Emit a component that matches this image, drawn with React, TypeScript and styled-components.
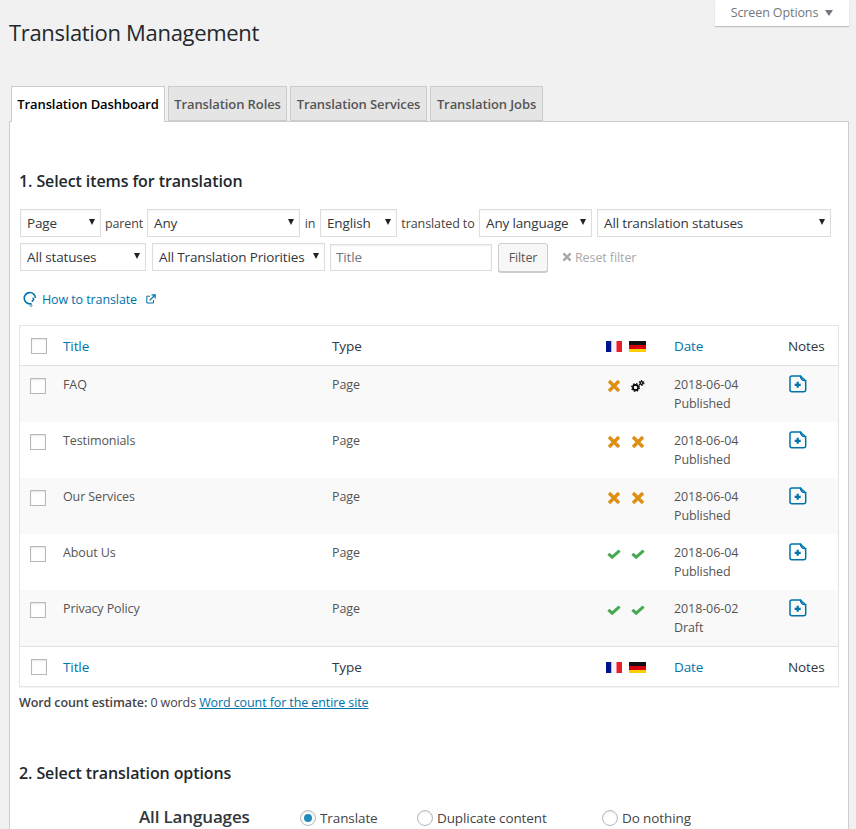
import styled, { createGlobalStyle } from "styled-components";

const FONT = `"Open Sans", "Noto Sans", "Liberation Sans", sans-serif`;

const rows = [
  { title: "FAQ", date: "2018-06-04", status: "Published", fr: "no", de: "busy" },
  { title: "Testimonials", date: "2018-06-04", status: "Published", fr: "no", de: "no" },
  { title: "Our Services", date: "2018-06-04", status: "Published", fr: "no", de: "no" },
  { title: "About Us", date: "2018-06-04", status: "Published", fr: "yes", de: "yes" },
  { title: "Privacy Policy", date: "2018-06-02", status: "Draft", fr: "yes", de: "yes" },
];

const Global = createGlobalStyle`
  html, body {
    margin: 0;
    height: 829px;
    overflow: hidden;
    background: #f1f1f1;
    font-family: ${FONT};
    font-size: 12.5px;
    letter-spacing: -0.1px;
    color: #444;
  }
`;

const Page = styled.div`
  width: 856px;
  height: 829px;
  overflow: hidden;
  position: relative;
`;

const ScreenOptions = styled.div`
  position: absolute;
  top: 0;
  right: 7px;
  width: 134px;
  height: 26px;
  box-sizing: border-box;
  background: #fff;
  box-shadow: 0 1px 1px rgba(0, 0, 0, 0.2);
  color: #72777c;
  display: flex;
  align-items: center;
  justify-content: center;
  gap: 7px;
  padding-bottom: 1px;
`;

const DownArrow = styled.span`
  width: 0;
  height: 0;
  border-left: 4.5px solid transparent;
  border-right: 4.5px solid transparent;
  border-top: 6px solid #72777c;
`;

const Heading = styled.h1`
  margin: 0;
  padding: 17px 0 0 9px;
  height: 68px;
  box-sizing: border-box;
  font-size: 22px;
  line-height: 30px;
  font-weight: 400;
  letter-spacing: -0.32px;
  color: #23282d;
`;

const Tabs = styled.div`
  display: flex;
  gap: 3px;
  padding-left: 11px;
  margin-top: 18px;
  height: 35px;
  position: relative;
  z-index: 1;
`;

const Tab = styled.div<{ $active?: boolean; $w: number }>`
  width: ${(p) => p.$w}px;
  box-sizing: border-box;
  height: ${(p) => (p.$active ? 36 : 35)}px;
  border: 1px solid #ccc;
  border-bottom: ${(p) => (p.$active ? "none" : "1px solid #ccc")};
  background: ${(p) => (p.$active ? "#fff" : "#e5e5e5")};
  color: ${(p) => (p.$active ? "#000" : "#555")};
  font-size: 13px;
  font-weight: 600;
  letter-spacing: -0.1px;
  text-align: center;
  line-height: 34px;
  white-space: nowrap;
`;

const Panel = styled.div`
  margin: 0 7px 0 9px;
  box-sizing: border-box;
  height: 720px;
  background: #fff;
  border: 1px solid #ccc;
  padding: 46px 9px 0 9px;
`;

const SectionTitle = styled.h2`
  margin: 0;
  font-size: 16px;
  line-height: 26px;
  font-weight: 600;
  letter-spacing: -0.1px;
  color: #23282d;
`;

const FilterRow = styled.div<{ $top: number }>`
  display: flex;
  align-items: center;
  height: 28px;
  margin-top: ${(p) => p.$top}px;
  margin-left: 1px;
`;

const SelectWrap = styled.div<{ $w: number; $gap?: number }>`
  position: relative;
  width: ${(p) => p.$w}px;
  margin-left: ${(p) => p.$gap ?? 0}px;
  height: 28px;
  flex: none;

  &::after {
    content: "";
    position: absolute;
    right: 6px;
    top: 10px;
    border-left: 3.5px solid transparent;
    border-right: 3.5px solid transparent;
    border-top: 6px solid #222;
    pointer-events: none;
  }
`;

const Select = styled.select`
  appearance: none;
  width: 100%;
  height: 28px;
  box-sizing: border-box;
  border: 1px solid #ddd;
  border-radius: 0;
  background: #fff;
  padding: 0 0 0 6px;
  font-family: inherit;
  font-size: 13.5px;
  letter-spacing: -0.15px;
  color: #32373c;
  box-shadow: inset 0 1px 2px rgba(0, 0, 0, 0.04);
`;

const FilterLabel = styled.span<{ $w: number }>`
  width: ${(p) => p.$w}px;
  text-align: center;
  flex: none;
  color: #444;
`;

const TitleInput = styled.input`
  width: 162px;
  height: 27px;
  margin-left: 5px;
  box-sizing: border-box;
  border: 1px solid #ddd;
  padding: 0 5px;
  font-family: inherit;
  font-size: 13.5px;
  letter-spacing: -0.15px;
  box-shadow: inset 0 1px 2px rgba(0, 0, 0, 0.07);
  &::placeholder {
    color: #72777c;
  }
`;

const FilterButton = styled.button`
  width: 50px;
  height: 29px;
  margin-left: 6px;
  box-sizing: border-box;
  border: 1px solid #ccc;
  border-radius: 3px;
  background: #f7f7f7;
  box-shadow: 0 1px 0 #ccc;
  color: #555;
  font: inherit;
  letter-spacing: inherit;
  padding: 0;
`;

const ResetFilter = styled.span`
  display: flex;
  align-items: center;
  gap: 3px;
  margin-left: 14px;
  color: #a9a9a9;
`;

const HowTo = styled.div`
  display: flex;
  align-items: center;
  height: 20px;
  margin: 18px 0 0 3px;
  color: #0073aa;
`;

const HowToText = styled.span`
  margin: 0 9px 0 4px;
`;

const ListTable = styled.table`
  width: 820px;
  margin-top: 16px;
  table-layout: fixed;
  border-collapse: separate;
  border-spacing: 0;
  border: 1px solid #e5e5e5;
  box-shadow: 0 1px 1px rgba(0, 0, 0, 0.04);
`;

const HeadCell = styled.th<{ $w?: number; $link?: boolean; $foot?: boolean }>`
  ${(p) => (p.$w ? `width: ${p.$w}px;` : "")}
  height: 40px;
  padding: 1px 0 0;
  box-sizing: border-box;
  text-align: left;
  font-weight: 400;
  font-size: 13.5px;
  color: ${(p) => (p.$link ? "#0073aa" : "#32373c")};
  border-bottom: ${(p) => (p.$foot ? "none" : "1px solid #e1e1e1")};
  border-top: ${(p) => (p.$foot ? "1px solid #e1e1e1" : "none")};
`;

const Row = styled.tr<{ $odd: boolean }>`
  background: ${(p) => (p.$odd ? "#f9f9f9" : "#fff")};
`;

const Cell = styled.td`
  height: 56px;
  box-sizing: border-box;
  padding: 9px 0 0;
  vertical-align: top;
  line-height: 19px;
  color: #555;
`;

const CheckBox = styled.span`
  display: block;
  width: 16px;
  height: 16px;
  margin-left: 11px;
  box-sizing: border-box;
  border: 1px solid #b4b9be;
  background: #fff;
  box-shadow: inset 0 1px 2px rgba(0, 0, 0, 0.1);
`;

const RowCheck = styled(CheckBox)`
  margin-top: 3px;
  margin-left: 10px;
`;

const Flags = styled.div`
  display: flex;
  gap: 7px;
  align-items: center;
  padding-left: 1px;
`;

const StatusIcons = styled.div`
  display: flex;
  gap: 8px;
  height: 18px;
  align-items: center;
  margin-top: 2px;
  padding-left: 1px;
`;

const StatusSlot = styled.span`
  width: 16px;
  display: flex;
  justify-content: center;
`;

const NoteButton = styled.span`
  display: block;
  margin-left: 1px;
`;

const WordCount = styled.p`
  margin: 7px 0 0;
  line-height: 18px;
  color: #444;

  b {
    font-weight: 600;
  }
  a {
    color: #0073aa;
    text-decoration: underline;
  }
`;

const OptionsTitle = styled(SectionTitle)`
  margin-top: 48px;
`;

const LangRow = styled.div`
  display: flex;
  align-items: center;
  height: 24px;
  margin-top: 19px;
  padding-left: 120px;
`;

const LangName = styled.div`
  width: 161px;
  padding-bottom: 2px;
  font-size: 17px;
  font-weight: 600;
  color: #32373c;
  letter-spacing: -0.15px;
`;

const RadioItem = styled.label<{ $w: number }>`
  width: ${(p) => p.$w}px;
  display: flex;
  align-items: center;
  gap: 4px;
  padding-top: 2px;
  font-size: 13.5px;
  color: #444;
`;

const RadioDot = styled.span<{ $on?: boolean }>`
  width: 16px;
  height: 16px;
  box-sizing: border-box;
  border-radius: 50%;
  border: 1px solid #b4b9be;
  background: #fff;
  display: flex;
  align-items: center;
  justify-content: center;
  box-shadow: inset 0 1px 2px rgba(0, 0, 0, 0.1);

  &::before {
    content: "";
    width: 8px;
    height: 8px;
    border-radius: 50%;
    background: ${(p) => (p.$on ? "#1e8cbe" : "transparent")};
  }
`;

const FlagFr = () => (
  <svg width="16" height="11" viewBox="0 0 16 11">
    <rect width="5.5" height="11" fill="#00148c" />
    <rect x="5.5" width="5" height="11" fill="#f4f4fa" />
    <rect x="10.5" width="5.5" height="11" fill="#ed1c2a" />
  </svg>
);

const FlagDe = () => (
  <svg width="17" height="11" viewBox="0 0 17 11">
    <rect width="17" height="4" fill="#111" />
    <rect y="4" width="17" height="4" fill="#d8000f" />
    <rect y="8" width="17" height="3" fill="#ffce00" />
  </svg>
);

const NoteIcon = () => (
  <svg width="18" height="18" viewBox="0 0 18 18" fill="none">
    <path
      d="M3 1h8.5c0 2.8 1.8 4.6 5.2 4.8V14.7a2 2 0 0 1-2 2H3a2 2 0 0 1-2-2V3a2 2 0 0 1 2-2z"
      stroke="#0073aa"
      strokeWidth="1.5"
    />
    <path d="M11.5 1l5.2 4.8" stroke="#0073aa" strokeWidth="1.2" />
    <path d="M8.7 6.8v6M5.7 9.8h6" stroke="#0073aa" strokeWidth="2.2" />
  </svg>
);

const HelpIcon = () => (
  <svg width="16" height="16" viewBox="0 0 16 16" fill="none">
    <path d="M9.5 12.5A5.6 5.6 0 1 1 13.4 7" stroke="#0073aa" strokeWidth="1.6" />
    <path d="M10.5 7.5c1.6-.6 1.6 2-.8 3" stroke="#0073aa" strokeWidth="1.6" />
    <circle cx="9" cy="14.5" r="1" stroke="#0073aa" strokeWidth="0.7" />
  </svg>
);

const ExternalIcon = () => (
  <svg width="10" height="10" viewBox="0 0 10 10" fill="none" stroke="#0073aa">
    <path d="M7.5 6v3H.8V2.2H4" strokeWidth="1" />
    <path d="M3.6 6.4L8.5 1.5M5.5 .8h3.7v3.7" strokeWidth="1.2" />
  </svg>
);

const CrossIcon = ({ size, color }: { size: number; color: string }) => (
  <svg width={size} height={size} viewBox="0 0 14 14" fill="none">
    <path d="M2 2l10 10M12 2L2 12" stroke={color} strokeWidth="3.4" />
  </svg>
);

const CheckIcon = () => (
  <svg width="14" height="10" viewBox="0 0 14 10" fill="none">
    <path d="M1.4 4.8l3.8 3.4 7.4-6.6" stroke="#46a850" strokeWidth="3" />
  </svg>
);

const GearsIcon = () => (
  <svg width="14" height="12" viewBox="0 0 14 12" fill="none" stroke="#000">
    <circle cx="4.5" cy="7.5" r="2.6" strokeWidth="1.6" />
    <circle cx="4.5" cy="7.5" r="3.8" strokeWidth="1.4" strokeDasharray="1.5 1.5" />
    <circle cx="10.5" cy="3" r="1.4" strokeWidth="1.2" />
    <circle cx="10.5" cy="3" r="2.4" strokeWidth="1.1" strokeDasharray="1.2 1.2" />
  </svg>
);

const StatusIcon = ({ kind }: { kind: string }) => {
  if (kind === "no") return <CrossIcon size={14} color="#de8f12" />;
  if (kind === "yes") return <CheckIcon />;
  return <GearsIcon />;
};

const HeadRow = ({ foot }: { foot?: boolean }) => (
  <tr>
    <HeadCell $w={43} $foot={foot}>
      <CheckBox />
    </HeadCell>
    <HeadCell $w={269} $link $foot={foot}>
      Title
    </HeadCell>
    <HeadCell $w={273} $foot={foot}>
      Type
    </HeadCell>
    <HeadCell $w={69} $foot={foot}>
      <Flags>
        <FlagFr />
        <FlagDe />
      </Flags>
    </HeadCell>
    <HeadCell $w={114} $link $foot={foot}>
      Date
    </HeadCell>
    <HeadCell $foot={foot}>Notes</HeadCell>
  </tr>
);

const Dropdown = ({ w, gap, label }: { w: number; gap?: number; label: string }) => (
  <SelectWrap $w={w} $gap={gap}>
    <Select defaultValue={label}>
      <option>{label}</option>
    </Select>
  </SelectWrap>
);

export default function App() {
  return (
    <Page>
      <Global />
      <ScreenOptions>
        Screen Options <DownArrow />
      </ScreenOptions>
      <Heading>Translation Management</Heading>
      <Tabs>
        <Tab $active $w={154}>Translation Dashboard</Tab>
        <Tab $w={119}>Translation Roles</Tab>
        <Tab $w={137}>Translation Services</Tab>
        <Tab $w={113}>Translation Jobs</Tab>
      </Tabs>
      <Panel>
        <SectionTitle>1. Select items for translation</SectionTitle>
        <FilterRow $top={15}>
          <Dropdown w={81} label="Page" />
          <FilterLabel $w={46}>parent</FilterLabel>
          <Dropdown w={153} label="Any" />
          <FilterLabel $w={20}>in</FilterLabel>
          <Dropdown w={77} label="English" />
          <FilterLabel $w={82}>translated to</FilterLabel>
          <Dropdown w={113} label="Any language" />
          <Dropdown w={234} gap={5} label="All translation statuses" />
        </FilterRow>
        <FilterRow $top={6}>
          <Dropdown w={126} label="All statuses" />
          <Dropdown w={173} gap={6} label="All Translation Priorities" />
          <TitleInput placeholder="Title" />
          <FilterButton>Filter</FilterButton>
          <ResetFilter>
            <CrossIcon size={10} color="#a9a9a9" /> Reset filter
          </ResetFilter>
        </FilterRow>
        <HowTo>
          <HelpIcon />
          <HowToText>How to translate</HowToText>
          <ExternalIcon />
        </HowTo>
        <ListTable>
          <thead>
            <HeadRow />
          </thead>
          <tbody>
            {rows.map((r, i) => (
              <Row key={r.title} $odd={i % 2 === 0}>
                <Cell>
                  <RowCheck />
                </Cell>
                <Cell>{r.title}</Cell>
                <Cell>Page</Cell>
                <Cell>
                  <StatusIcons>
                    <StatusSlot>
                      <StatusIcon kind={r.fr} />
                    </StatusSlot>
                    <StatusSlot>
                      <StatusIcon kind={r.de} />
                    </StatusSlot>
                  </StatusIcons>
                </Cell>
                <Cell>
                  {r.date}
                  <br />
                  {r.status}
                </Cell>
                <Cell>
                  <NoteButton>
                    <NoteIcon />
                  </NoteButton>
                </Cell>
              </Row>
            ))}
          </tbody>
          <tfoot>
            <HeadRow foot />
          </tfoot>
        </ListTable>
        <WordCount>
          <b>Word count estimate:</b> 0 words <a>Word count for the entire site</a>
        </WordCount>
        <OptionsTitle>2. Select translation options</OptionsTitle>
        <LangRow>
          <LangName>All Languages</LangName>
          <RadioItem $w={117}>
            <RadioDot $on /> Translate
          </RadioItem>
          <RadioItem $w={185}>
            <RadioDot /> Duplicate content
          </RadioItem>
          <RadioItem $w={120}>
            <RadioDot /> Do nothing
          </RadioItem>
        </LangRow>
      </Panel>
    </Page>
  );
}
